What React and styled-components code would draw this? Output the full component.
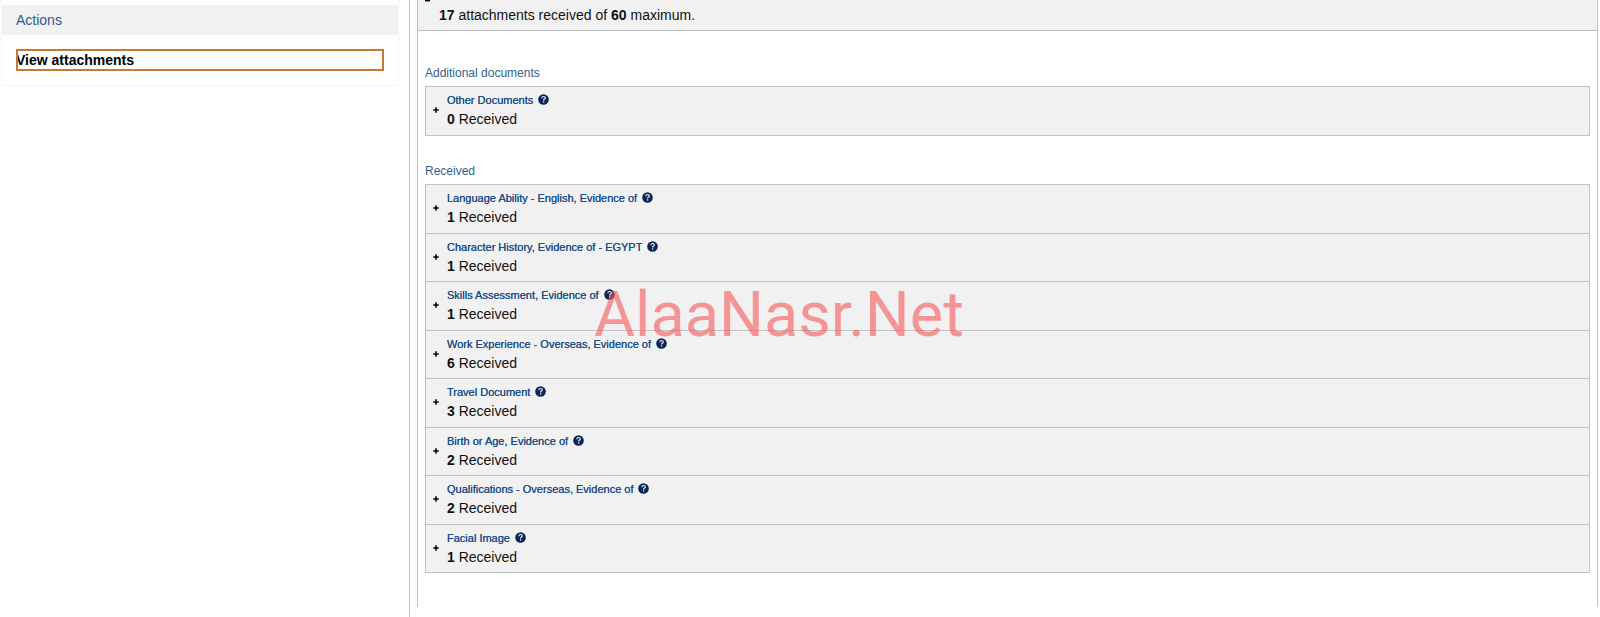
import styled, { createGlobalStyle } from 'styled-components';

const GlobalStyle = createGlobalStyle`
  * {
    box-sizing: border-box;
  }

  body {
    margin: 0;
    background: #fff;
    color: #111;
    font-family: 'Liberation Sans', Arial, sans-serif;
    font-size: 14px;
    line-height: 20px;
  }
`;

const Page = styled.div`
  position: relative;
  display: grid;
  grid-template-columns: 410px 1fr;
  min-height: 100vh;
`;

const Sidebar = styled.aside`
  padding: 0 10px 0 1px;
  border-right: 1px solid #c4c4c6;
`;

const ActionsPanel = styled.section`
  border: 1px solid #f5f5f5;
  border-top: none;
  padding-top: 5px;
`;

const PanelTitle = styled.h2`
  margin: 0;
  padding: 5px 14px;
  background: #f1f1f1;
  color: #2f5a93;
  font-size: 14px;
  font-weight: normal;
`;

const PanelBody = styled.div`
  padding: 14px;
`;

const ActionLink = styled.a`
  display: block;
  outline: 2px solid #c77a35;
  outline-offset: -2px;
  color: #000;
  font-weight: bold;
  line-height: 22px;
  text-decoration: none;
`;

const Main = styled.main`
  padding: 0 2px 10px 7px;
`;

const Attachments = styled.div`
  border: 1px solid #c0c0c4;
  border-width: 0 1px;
  min-height: 100%;
`;

const Summary = styled.div`
  display: flex;
  align-items: flex-start;
  padding-left: 7px;
  background: #f1f1f1;
  border-bottom: 1px solid #bdbec4;
`;

const SummaryText = styled.p`
  margin: 0;
  padding: 5px 0;
`;

const Groups = styled.div`
  display: grid;
  gap: 25px;
  padding: 32px 7px 34px;
`;

const GroupTitle = styled.h3`
  margin: 0;
  padding-bottom: 3px;
  color: #33608f;
  font-size: 12px;
  font-weight: normal;
`;

const DocumentList = styled.ul`
  margin: 0;
  padding: 0;
  list-style: none;
  border: 1px solid #c2c2c4;
  border-bottom: none;
`;

const DocumentRow = styled.li`
  display: flex;
  align-items: center;
  padding: 4px 5px 6px;
  background: #f1f1f1;
  border-bottom: 1px solid #c2c2c4;

  &:nth-child(even) {
    padding-bottom: 5px;
  }
`;

const IconButton = styled.button`
  display: flex;
  padding: 0;
  border: none;
  background: none;
  cursor: pointer;
`;

const CollapseButton = styled(IconButton)`
  width: 14px;
`;

const ExpandButton = styled(IconButton)`
  width: 16px;
  padding: 8px 2px;
`;

const HelpButton = styled(IconButton)`
  padding-bottom: 2px;
`;

const DocumentName = styled.div`
  display: flex;
  align-items: center;
  gap: 5px;
  color: #1c4f8a;
  font-size: 11px;
  line-height: 18px;
  text-shadow: 0 0 currentColor;
`;

const Watermark = styled.div`
  position: absolute;
  top: 285px;
  left: 594px;
  color: rgba(246, 86, 86, 0.6);
  font-family: Roboto, sans-serif;
  font-size: 63px;
  line-height: 60px;
  pointer-events: none;
`;

const additional = [{ name: 'Other Documents', count: 0 }];

const received = [
  { name: 'Language Ability - English, Evidence of', count: 1 },
  { name: 'Character History, Evidence of - EGYPT', count: 1 },
  { name: 'Skills Assessment, Evidence of', count: 1 },
  { name: 'Work Experience - Overseas, Evidence of', count: 6 },
  { name: 'Travel Document', count: 3 },
  { name: 'Birth or Age, Evidence of', count: 2 },
  { name: 'Qualifications - Overseas, Evidence of', count: 2 },
  { name: 'Facial Image', count: 1 },
];

const MinusIcon = () => (
  <svg width="5" height="2" viewBox="0 0 5 2">
    <path d="M0 0h5v1.4H0z" fill="#000" />
  </svg>
);

const PlusIcon = () => (
  <svg width="6" height="6" viewBox="0 0 6 6">
    <path d="M3 0.3v5.4M0.3 3h5.4" stroke="#000" strokeWidth="1.5" />
  </svg>
);

const HelpIcon = () => (
  <svg width="11" height="11" viewBox="0 0 11 11" fill="none">
    <circle cx="5.5" cy="5.5" r="5.3" fill="#0a2658" />
    <path
      d="M3.8 4.2C3.9 2.9 4.7 2.5 5.6 2.5s1.7.5 1.7 1.4c0 1.2-1.7 1.1-1.7 2.5"
      stroke="#f0f0f0"
      strokeWidth="1.2"
    />
    <path d="M5.6 7.3v1.3" stroke="#f0f0f0" strokeWidth="1.3" />
  </svg>
);

const DocumentGroup = ({ title, documents }) => (
  <section>
    <GroupTitle>{title}</GroupTitle>
    <DocumentList>
      {documents.map(({ name, count }) => (
        <DocumentRow key={name}>
          <ExpandButton type="button" aria-label={`Expand ${name}`}>
            <PlusIcon />
          </ExpandButton>
          <div>
            <DocumentName>
              {name}
              <HelpButton type="button" aria-label={`Help for ${name}`}>
                <HelpIcon />
              </HelpButton>
            </DocumentName>
            <div>
              <strong>{count}</strong> Received
            </div>
          </div>
        </DocumentRow>
      ))}
    </DocumentList>
  </section>
);

const App = () => {
  return (
    <>
      <GlobalStyle />
      <Page>
        <Sidebar>
          <ActionsPanel>
            <PanelTitle>Actions</PanelTitle>
            <PanelBody>
              <ActionLink href="#attachments">View attachments</ActionLink>
            </PanelBody>
          </ActionsPanel>
        </Sidebar>
        <Main id="attachments">
          <Attachments>
            <Summary>
              <CollapseButton type="button" aria-label="Collapse attachments">
                <MinusIcon />
              </CollapseButton>
              <SummaryText>
                <strong>17</strong> attachments received of <strong>60</strong>{' '}
                maximum.
              </SummaryText>
            </Summary>
            <Groups>
              <DocumentGroup
                title="Additional documents"
                documents={additional}
              />
              <DocumentGroup title="Received" documents={received} />
            </Groups>
          </Attachments>
        </Main>
        <Watermark>AlaaNasr.Net</Watermark>
      </Page>
    </>
  );
};

export default App;
